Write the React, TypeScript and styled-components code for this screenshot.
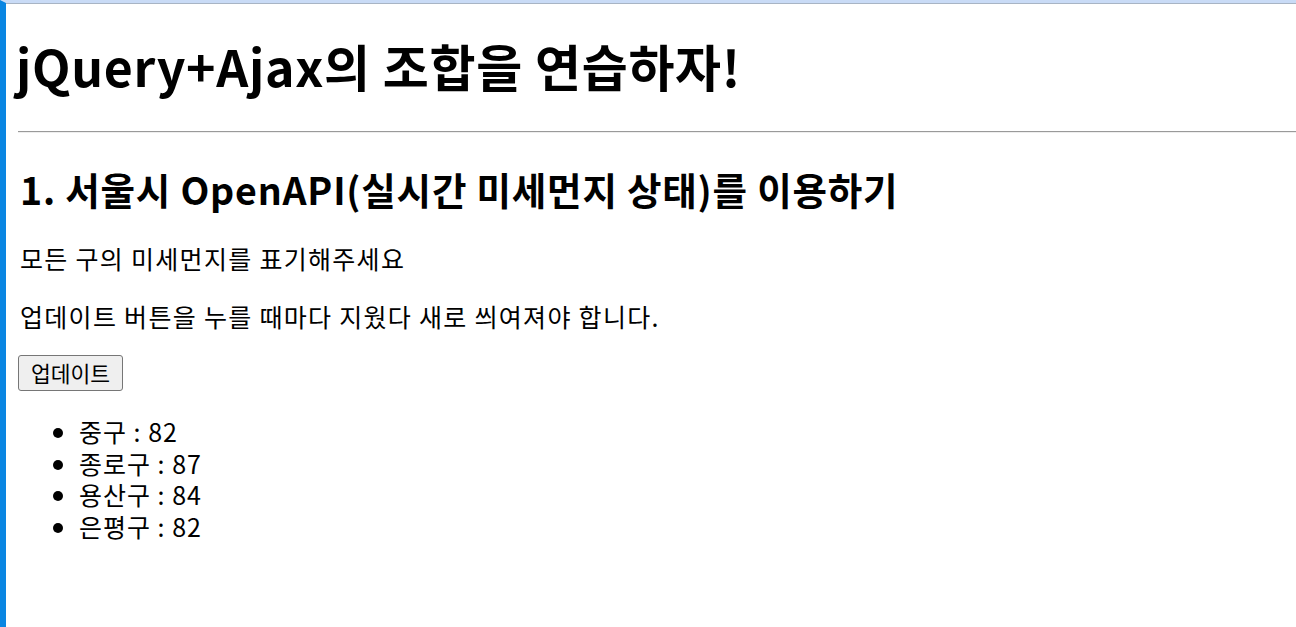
import styled, { createGlobalStyle } from "styled-components";

const GlobalStyle = createGlobalStyle`
  html, body {
    margin: 0;
    padding: 0;
    background: #ffffff;
  }
  body {
    font-family: "Noto Sans CJK KR", "Noto Sans", sans-serif;
    color: #000000;
  }
`;

const Frame = styled.div`
  min-height: 100vh;
  box-sizing: border-box;
  border-left: 6px solid #0a86e2;
  border-top: 3px solid #c9dbf6;
  box-shadow: inset 0 1px 0 #a8b4c4;
  padding: 0 0 20px 12px;
`;

const Title = styled.h1`
  font-size: 50px;
  font-weight: 700;
  line-height: 54px;
  letter-spacing: 0.7px;
  margin: 35px 0 39px -2px;
`;

const Rule = styled.hr`
  margin: 0;
  border: none;
  border-top: 1px solid #9a9a9a;
  border-bottom: 1px solid #eeeeee;
  height: 0;
`;

const Heading = styled.h2`
  font-size: 37.5px;
  font-weight: 700;
  line-height: 40px;
  letter-spacing: 0.8px;
  margin: 36px 0 34px 2px;
`;

const Text = styled.p`
  font-size: 25px;
  line-height: 30px;
  letter-spacing: 1.3px;
  margin: 0 0 28px 2px;
`;

const UpdateButton = styled.button`
  font-family: inherit;
  font-size: 21.5px;
  line-height: 26px;
  height: 36px;
  padding: 0 12px;
  margin: -4px 0 0 0;
  border: 1px solid #767676;
  border-radius: 3px;
  background: #efefef;
  color: #000;
`;

const List = styled.ul`
  margin: 25px 0 0 0;
  padding: 0 0 0 61px;
`;

const Item = styled.li`
  font-size: 25px;
  line-height: 31.5px;
  letter-spacing: 1px;
`;

const dust = [
  { name: "중구", value: 82 },
  { name: "종로구", value: 87 },
  { name: "용산구", value: 84 },
  { name: "은평구", value: 82 },
];

function App() {
  return (
    <>
      <GlobalStyle />
      <Frame>
        <Title>jQuery+Ajax의 조합을 연습하자!</Title>
        <Rule />
        <Heading>1. 서울시 OpenAPI(실시간 미세먼지 상태)를 이용하기</Heading>
        <Text>모든 구의 미세먼지를 표기해주세요</Text>
        <Text>업데이트 버튼을 누를 때마다 지웠다 새로 씌여져야 합니다.</Text>
        <UpdateButton>업데이트</UpdateButton>
        <List>
          {dust.map((d) => (
            <Item key={d.name}>
              {d.name} : {d.value}
            </Item>
          ))}
        </List>
      </Frame>
    </>
  );
}

export default App;
